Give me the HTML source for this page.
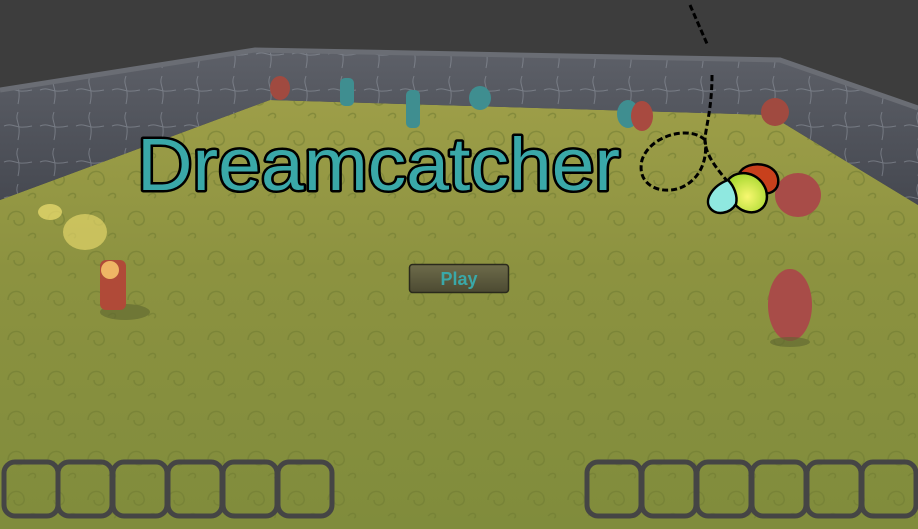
<!DOCTYPE html>
<html><head><style>
html,body{margin:0;padding:0;width:918px;height:529px;overflow:hidden;background:#3d3d3d}
</style></head><body>
<svg width="918" height="529" viewBox="0 0 918 529" xmlns="http://www.w3.org/2000/svg">
<defs>
<linearGradient id="fl" x1="0" y1="0" x2="0" y2="1">
<stop offset="0" stop-color="#9d9e48"/><stop offset="0.4" stop-color="#8c9240"/><stop offset="1" stop-color="#808c3c"/>
</linearGradient>
<linearGradient id="wl" x1="0" y1="0" x2="0" y2="1">
<stop offset="0" stop-color="#5d6068"/><stop offset="1" stop-color="#454850"/>
</linearGradient>
<pattern id="fp" width="40" height="40" patternUnits="userSpaceOnUse">
<path d="M8 20 C8 10 22 8 24 18 C26 26 14 28 14 20 M28 36 C34 30 38 36 34 38" stroke="#6e7a32" stroke-width="1.5" fill="none" opacity="0.5"/>
</pattern>
<pattern id="wp" width="36" height="36" patternUnits="userSpaceOnUse">
<path d="M18 4 C14 14 22 14 18 32 M4 18 C14 14 14 22 32 18" stroke="#9aa0aa" stroke-width="1" fill="none" opacity="0.5"/>
</pattern>
<linearGradient id="bt" x1="0" y1="0" x2="0" y2="1">
<stop offset="0" stop-color="#6d6b4a"/><stop offset="1" stop-color="#4c4a32"/>
</linearGradient>
<radialGradient id="yg" cx="0.5" cy="0.6" r="0.6">
<stop offset="0" stop-color="#f8f870"/><stop offset="1" stop-color="#a8d830"/>
</radialGradient>
</defs>
<rect width="918" height="529" fill="#3d3d3d"/>
<polygon points="0,200 270,100 770,115 918,205 918,529 0,529" fill="url(#fl)"/>
<polygon points="0,200 270,100 770,115 918,205 918,529 0,529" fill="url(#fp)"/>
<polygon points="0,90 255,50 780,60 918,108 918,205 770,115 270,100 0,200" fill="url(#wl)"/>
<polygon points="0,90 255,50 780,60 918,108 918,205 770,115 270,100 0,200" fill="url(#wp)"/>
<polyline points="0,90 255,50 780,60 918,108" fill="none" stroke="#6a6d74" stroke-width="5"/>
<ellipse cx="280" cy="88" rx="10" ry="12" fill="#a04a40"/>
<rect x="340" y="78" width="14" height="28" rx="5" fill="#3f8e90"/>
<rect x="406" y="90" width="14" height="38" rx="5" fill="#3f8e90"/>
<ellipse cx="480" cy="98" rx="11" ry="12" fill="#3f8e90"/>
<ellipse cx="628" cy="114" rx="11" ry="14" fill="#3f8e90"/>
<ellipse cx="642" cy="116" rx="11" ry="15" fill="#a84a40"/>
<ellipse cx="775" cy="112" rx="14" ry="14" fill="#a04a40"/>
<ellipse cx="798" cy="195" rx="23" ry="22" fill="#a84c48"/>
<ellipse cx="790" cy="305" rx="22" ry="36" fill="#a84c48"/>
<ellipse cx="790" cy="342" rx="20" ry="5" fill="#5d6630" opacity="0.6"/>
<ellipse cx="125" cy="312" rx="25" ry="8" fill="#5d6630" opacity="0.6"/>
<rect x="100" y="260" width="26" height="50" rx="6" fill="#b04a38"/>
<ellipse cx="85" cy="232" rx="22" ry="18" fill="#f0e070" opacity="0.6"/>
<ellipse cx="50" cy="212" rx="12" ry="8" fill="#f0e070" opacity="0.7"/>
<ellipse cx="110" cy="270" rx="9" ry="9" fill="#ffd070" opacity="0.8"/>
<text x="137" y="190" font-family="Liberation Sans, sans-serif" font-size="74" fill="#3aa8a8" stroke="#000" stroke-width="5" paint-order="stroke" stroke-linejoin="round" textLength="483" lengthAdjust="spacingAndGlyphs">Dreamcatcher</text>
<path d="M690 5 L708 46" stroke="#000" stroke-width="3" stroke-dasharray="6,3" fill="none"/>
<path d="M712 75 C712 110 705 130 705 140 C705 155 718 170 728 182" stroke="#000" stroke-width="3" stroke-dasharray="6,3" fill="none"/>
<path d="M705 140 C690 125 650 135 642 160 C636 185 660 195 680 188 C700 180 708 160 705 140" stroke="#000" stroke-width="3" stroke-dasharray="6,3" fill="none"/>
<path d="M740 172 C748 160 775 162 778 178 C780 190 770 196 760 192 Z" fill="#c8401c" stroke="#000" stroke-width="2.5"/>
<path d="M728 180 C738 168 760 172 766 190 C770 205 760 214 748 212 C740 211 734 204 732 200 Z" fill="url(#yg)" stroke="#000" stroke-width="2.5"/>
<path d="M728 180 C712 186 704 200 710 208 C716 216 730 214 736 204 C738 196 734 186 728 180 Z" fill="#8fe8e0" stroke="#000" stroke-width="2.5"/>
<rect x="409.5" y="264.5" width="99" height="28" rx="3" fill="url(#bt)" stroke="#2a2a1c" stroke-width="1.5"/>
<text x="459" y="285" text-anchor="middle" font-family="Liberation Sans, sans-serif" font-weight="bold" font-size="18" fill="#3aa8a8">Play</text>
<g fill="none" stroke="#454545" stroke-width="5">
<rect x="4" y="462" width="54" height="54" rx="11"/><rect x="58" y="462" width="54" height="54" rx="11"/>
<rect x="113" y="462" width="54" height="54" rx="11"/><rect x="168" y="462" width="54" height="54" rx="11"/>
<rect x="223" y="462" width="54" height="54" rx="11"/><rect x="278" y="462" width="54" height="54" rx="11"/>
<rect x="587" y="462" width="54" height="54" rx="11"/><rect x="642" y="462" width="54" height="54" rx="11"/>
<rect x="697" y="462" width="54" height="54" rx="11"/><rect x="752" y="462" width="54" height="54" rx="11"/>
<rect x="807" y="462" width="54" height="54" rx="11"/><rect x="862" y="462" width="54" height="54" rx="11"/>
</g>
</svg>
</body></html>
